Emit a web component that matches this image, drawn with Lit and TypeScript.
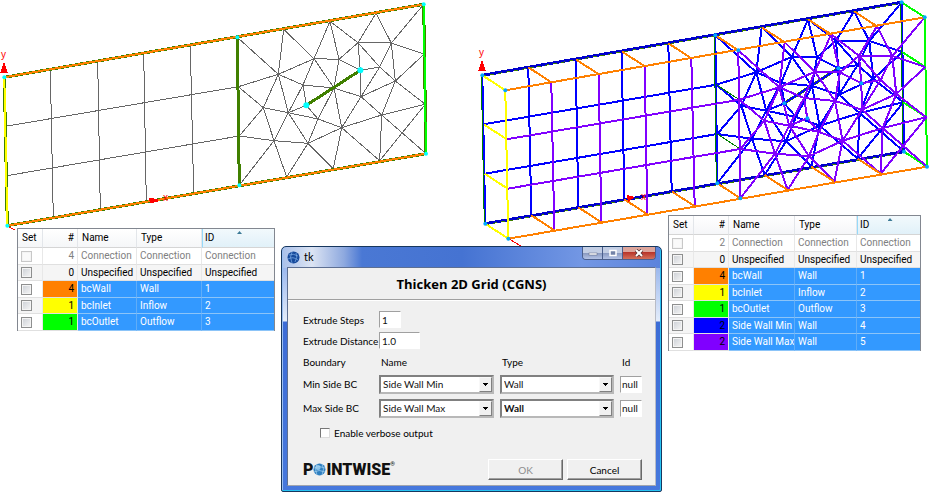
import { LitElement, html, css, svg } from "lit";
import { customElement, property } from "lit/decorators.js";
import { classMap } from "lit/directives/class-map.js";

type Point = [number, number];

/* Mesh nodes, three units to the pixel. */
const NODES: Record<string, Point> = {
  OT: [13, 232], OB: [22, 677],
  TL: [712, 112], T1: [851, 88], T2: [990, 64], T3: [1128, 40], TR: [1271, 13],
  BL: [718, 556], B1: [860, 531], B2: [1000, 506], B3: [1139, 482], BR: [1278, 461],
  L1: [715, 260], L2: [718, 408], R1: [1273, 162], R2: [1276, 313],
  a: [835, 223], b: [942, 176], c: [1017, 178], d: [1074, 128], e: [1174, 129],
  f: [1081, 211], g: [1139, 201], h: [1186, 243], i: [909, 255], j: [1002, 264],
  k: [1083, 290], l: [919, 316], m: [790, 323], n: [865, 338], o: [954, 357],
  p: [1025, 383], q: [1145, 345], r: [822, 422], s: [924, 430],
  O1: [17, 379], O2: [20, 527],
  u1: [151, 208], u2: [293, 184], u3: [431, 160], u4: [571, 136],
  v1: [160, 652], v2: [301, 628], v3: [439, 604], v4: [581, 580],
};

const GRID_EDGES = "u1-v1 u2-v2 u3-v3 u4-v4 O1-L1 O2-L2";
const MESH_EDGES =
  "TL-a T1-a T1-b a-b b-T2 T2-c b-c T2-d c-d c-f c-j d-T3 d-e d-f d-g T3-e e-TR e-R1 e-h e-g " +
  "f-g g-h h-R1 h-R2 h-k h-q f-k g-k j-k i-j b-i b-j a-i a-m a-n a-L1 i-l i-n L1-m m-n m-L2 m-r " +
  "n-l n-r n-s n-o l-o o-s o-p o-j j-p k-p k-q p-q p-s p-B2 p-B3 s-B1 s-B2 r-s r-L2 r-BL r-B1 " +
  "q-R2 q-B3 q-BR R2-B3";

const at = (name: string, dx = 0, dy = 0): string =>
  `${(NODES[name][0] / 3 + dx).toFixed(1)} ${(NODES[name][1] / 3 + dy).toFixed(1)}`;

const path = (edges: string, dx = 0, dy = 0): string =>
  edges.split(" ").map((edge) => {
    const [from, to] = edge.split("-");
    return `M${at(from, dx, dy)}L${at(to, dx, dy)}`;
  }).join("");

/* Back plane and front plane of the thickened grid. */
const MIN: Point = [478, -2];
const MAX: Point = [501, 13];

const rungs = (names: string): string =>
  names.split(" ").map((n) => `M${at(n, ...MIN)}L${at(n, ...MAX)}`).join("");

const dot = (name: string, offset: Point = [0, 0], r = 2) => svg`
  <circle r=${r} cx=${NODES[name][0] / 3 + offset[0]} cy=${NODES[name][1] / 3 + offset[1]}></circle>`;

@customElement("grid-view")
export class GridView extends LitElement {
  static styles = css`
    :host { display: block; }
    svg { display: block; width: 100%; height: auto; }
    path { fill: none; shape-rendering: crispEdges; }
    .cell { stroke: #666; stroke-width: 1; }
    .edge { stroke: #408000; stroke-width: 3; }
    .wall { stroke: #ff8000; stroke-width: 2; }
    .under { stroke: #408000; stroke-width: 3; }
    .inlet { stroke: #ff0; stroke-width: 2; }
    .outlet { stroke: #0f0; stroke-width: 2; }
    .min { stroke: #00f; stroke-width: 2; }
    .rim { stroke: #00c; stroke-width: 3; }
    .dashes { stroke: #408000; stroke-width: 1; stroke-dasharray: 4 4; }
    .max { stroke: #8000ff; stroke-width: 2; }
    .thin { stroke: #008000; stroke-width: 1; }
    .axis { stroke: #f00; stroke-width: 1; }
    path.arrow { fill: #f00; }
    .nodes { fill: #0ff; }
    .nodes-3d { fill: #00a8ff; }
    text { fill: #f00; font: 10px "Liberation Sans", sans-serif; }
  `;

  render() {
    return html`
      <svg viewBox="0 0 930 246" role="img" aria-label="2D grid and thickened 3D grid">
        <path class="cell" d=${path(GRID_EDGES + " " + MESH_EDGES)}></path>
        <path class="edge" d=${path("TL-BL l-f")}></path>
        <path class="under" d=${path("OT-TR OB-BR OT-OB TR-BR")}></path>
        <path class="wall" d=${path("OT-TR OB-BR")}></path>
        <path class="inlet" d=${path("OT-OB")}></path>
        <path class="outlet" d=${path("TR-BR")}></path>
        <path class="arrow" d="M4 62L8 73H0Z M149 198L158 199V202L150 203Z"></path>
        <path class="axis" d="M9 227L15 230"></path>
        <text x="1" y="58">y</text>
        <text x="163" y="201">x</text>
        <g class="nodes">
          ${["OT", "OB", "TL", "BL", "TR", "BR"].map((n) => dot(n))}
          ${["l", "f"].map((n) => dot(n, [0, 0], 3))}
        </g>

        <path class="edge" d=${path("l-f", ...MIN)}></path>
        <path class="min" d=${path(GRID_EDGES + " " + MESH_EDGES + " l-f TL-BL TR-BR OT-OB", ...MIN)}></path>
        <path class="thin" d=${path("TL-BL TR-BR OT-OB", MIN[0] - 1, MIN[1])}></path>
        <path class="rim" d=${path("OT-TR OB-BR", ...MIN)}></path>
        <path class="dashes" d=${path("OT-TR OB-BR", MIN[0], MIN[1] + 1)}></path>
        <path class="thin" d=${rungs("L1 L2")}></path>
        <path class="outlet" d=${rungs("TR R1 R2 BR") + path("TR-BR", ...MAX)}></path>
        <path class="inlet" d=${rungs("OT O1 O2 OB") + path("OT-OB", ...MAX)}></path>
        <path class="max" d=${path(GRID_EDGES + " " + MESH_EDGES + " TL-BL", ...MAX)}></path>
        <path class="wall" d=${rungs("u1 u2 u3 u4 v1 v2 v3 v4 TL T1 T2 T3 BL B1 B2 B3") + path("OT-TR OB-BR", ...MAX)}></path>
        <path class="arrow" d="M482 60L486 71H478Z M627 195L635 197L628 202Z"></path>
        <path class="axis" d="M509 239L521 246"></path>
        <text x="479" y="56">y</text>
        <text x="641" y="200">x</text>
        <g class="nodes-3d">
          ${["OT", "OB", "TL", "BL", "TR", "BR", "l", "f"].map((n) => [dot(n, MIN), dot(n, MAX)])}
        </g>
      </svg>
    `;
  }
}

interface Condition {
  count: number;
  name: string;
  type: string;
  id: string;
  look: string;
}

const plain = (count: number): Condition[] => [
  { count, name: "Connection", type: "Connection", id: "Connection", look: "muted" },
  { count: 0, name: "Unspecified", type: "Unspecified", id: "Unspecified", look: "plain" },
  { count: 4, name: "bcWall", type: "Wall", id: "1", look: "orange" },
  { count: 1, name: "bcInlet", type: "Inflow", id: "2", look: "yellow" },
  { count: 1, name: "bcOutlet", type: "Outflow", id: "3", look: "green" },
];

const BEFORE = plain(4);
const AFTER: Condition[] = [
  ...plain(2),
  { count: 2, name: "Side Wall Min", type: "Wall", id: "4", look: "blue" },
  { count: 2, name: "Side Wall Max", type: "Wall", id: "5", look: "violet" },
];

@customElement("condition-table")
export class ConditionTable extends LitElement {
  static styles = css`
    :host { display: block; font: 10px/14px Roboto, "Noto Sans", sans-serif; color: #000; }
    table {
      width: 100%; border-collapse: separate; border-spacing: 0; table-layout: fixed;
      background: #fff; box-sizing: border-box;
      border: solid #828790; border-width: 1px 1px 0 1px;
    }
    th, td { box-sizing: border-box; padding: 0 0 0 3px; text-align: left; white-space: nowrap; overflow: hidden; font-weight: 400; }
    th { height: 19px; padding-left: 4px; border-right: 1px solid #e3e6ea; border-bottom: 1px solid #d5d5d5; background: linear-gradient(#fff, #f5f6f8); }
    td { height: 17px; border-right: 1px solid #e8e8e8; border-bottom: 1px solid #e0e0e0; }
    tr:nth-child(even) td { height: 16px; background: #f5f5f5; }
    th.count, td.count { text-align: right; padding: 0 3px 0 0; }
    th.sorted {
      border-left: 1px solid #96d9f9; border-right: 0; padding-left: 2px;
      background: linear-gradient(#f2f9fc, #e1f1f9);
    }
    .heading { display: grid; }
    .heading > * { grid-area: 1 / 1; }
    .marker { width: 5px; height: 3px; justify-self: center; background: #3c7a96; clip-path: polygon(50% 0, 100% 100%, 0 100%); }
    td:last-child { border-right: 0; }
    .set { width: 25px; }
    .num { width: 35px; }
    .name { width: 59px; }
    .compact .name { width: 66px; }
    .type { width: 65px; }
    .compact .type { width: 62px; }
    .muted { color: #808080; }
    .picked .text, tr.picked:nth-child(even) .text { background: #39f; color: #fff; border-right-color: #60adf8; border-bottom-color: #8cc4f8; }
    tr.orange td.count { background: #ff8000; }
    tr.yellow td.count { background: #ff0; }
    tr.green td.count { background: #0f0; }
    tr.blue td.count { background: #00f; }
    tr.violet td.count { background: #8000ff; }
    input {
      appearance: none; display: block; box-sizing: border-box; width: 11px; height: 11px; margin: 0;
      border: 1px solid #8e8f8f; outline: 1px solid #f4f4f4; outline-offset: -2px;
      background: linear-gradient(135deg, #cbcfd5, #f6f6f6);
    }
    .muted input { border-color: #c8c8c8; background: #fafafa; }
  `;

  @property({ attribute: false }) rows: Condition[] = [];
  @property({ type: Boolean }) compact = false;

  render() {
    return html`
      <table class=${classMap({ compact: this.compact })}>
        <thead>
          <tr>
            <th class="set">Set</th>
            <th class="num count">#</th>
            <th class="name">Name</th>
            <th class="type">Type</th>
            <th class="sorted"><div class="heading"><span>ID</span><span class="marker"></span></div></th>
          </tr>
        </thead>
        <tbody>
          ${this.rows.map((row) => html`
            <tr class=${classMap({ [row.look]: true, picked: row.look !== "muted" && row.look !== "plain" })}>
              <td><input type="checkbox" aria-label="Set ${row.name}" ?disabled=${row.look === "muted"}></td>
              <td class="count">${row.count}</td>
              <td class="text">${row.name}</td>
              <td class="text">${row.type}</td>
              <td class="text">${row.id}</td>
            </tr>`)}
        </tbody>
      </table>
    `;
  }
}

@customElement("thicken-dialog")
export class ThickenDialog extends LitElement {
  static styles = css`
    :host { display: block; font: 10px/14px Lato, "Noto Sans", sans-serif; color: #000; }
    .window {
      box-sizing: border-box; padding: 0 5px 5px; border: 1px solid #17375e; border-radius: 5px 5px 2px 2px;
      box-shadow: inset -1px -1px #27c3f3, inset 1px 0 #9cc0f2;
      background:
        linear-gradient(90deg, #a9c0ea 0, #dce4f3 30px, #8ea9df 62px, #4a78d4 80px, #4573d2 180px, #7397e4 300px, #5b83dc 100%) 0 0 / 100% 21px no-repeat,
        linear-gradient(#7fa3e8, #e4edfb 74px, #3c6cd6 75px, #4678dd 100%);
    }
    .titlebar { display: flex; align-items: center; height: 20px; }
    .titlebar svg { width: 13px; height: 13px; }
    .caption { flex: 1; padding-left: 4px; font-size: 11px; }
    .controls { display: flex; align-self: flex-start; border: 1px solid #4b5f8c; border-top: 0; border-radius: 0 0 4px 4px; overflow: hidden; }
    .controls button {
      display: grid; place-items: center; width: 20px; height: 12px; padding: 0; border: 0; border-right: 1px solid #4b5f8c;
      background: linear-gradient(#c3cee4 50%, #8898bf 50%, #b4c3e6);
    }
    .controls button.close { width: 32px; border-right: 0; background: linear-gradient(#dda59b 45%, #b8352a 45%, #d4705a); }
    .controls svg { width: 10px; height: 8px; }
    .body { background: #f0f0f0; border: 1px solid #5d6f92; border-right-color: #b8bcc6; border-bottom-color: #a0a4ae; }
    h1 { margin: 0; padding: 6px 0 5px; text-align: center; font: 700 13px/20px "Open Sans", "Noto Sans", sans-serif; color: #000; border-bottom: 1px solid #a0a0a0; box-shadow: 0 1px #fff; }
    form { display: block; padding: 9px 13px 5px 15px; }
    .fields {
      display: grid; grid-template-columns: 70px 115fr 114fr 22px; column-gap: 6px;
      grid-template-rows: repeat(3, 21px) 24px 24px 25px; align-items: center;
    }
    .fields label { white-space: nowrap; }
    .wide { grid-column: 2 / -1; }
    .head { padding-left: 2px; }
    input, select { box-sizing: border-box; font: inherit; color: #111; margin: 0; }
    input.box { height: 17px; padding: 0 2px; border: 1px solid; border-color: #a0a0a0 #fff #fff #a0a0a0; background: #fff; width: 22px; }
    input.box.long { width: 41px; }
    input.box.id { padding: 0 0 0 1px; }
    .combo { display: grid; }
    .combo::after {
      content: ""; grid-area: 1 / 1; justify-self: end; align-self: center; pointer-events: none;
      width: 13px; height: 15px; margin-right: 2px; box-sizing: border-box;
      border: 1px solid; border-color: #f8f8f8 #808080 #808080 #f8f8f8;
      background: linear-gradient(#000, #000) 3px 5px / 5px 1px no-repeat, linear-gradient(#000, #000) 4px 6px / 3px 1px no-repeat,
        linear-gradient(#000, #000) 5px 7px / 1px 1px no-repeat, #f0f0f0;
    }
    select {
      appearance: none; grid-area: 1 / 1; width: 100%; height: 19px; padding: 0 14px 0 2px; border-radius: 0;
      border: 2px solid; border-color: #808080 #b8b8b8 #b8b8b8 #808080; background: #fff;
    }
    select.strong { font-weight: 700; }
    .check { grid-column: 1 / -1; display: flex; align-items: center; gap: 4px; padding-left: 17px; }
    .check input { appearance: none; width: 10px; height: 10px; border: 1px solid; border-color: #777 #ddd #ddd #777; background: #fff; }
    .footer { display: flex; align-items: center; gap: 4px; padding-top: 14px; }
    .logo { display: flex; align-items: center; flex: 1; font: 900 16px/20px Roboto, "Liberation Sans", sans-serif; color: #111; }
    .logo svg { width: 13px; height: 13px; }
    .logo sup { align-self: flex-start; font-size: 6px; line-height: 8px; }
    .action {
      width: 75px; height: 21px; padding: 0; font: inherit; color: #000; background: #f0f0f0;
      border: 1px solid; border-color: #fff #696969 #696969 #fff; box-shadow: inset -1px -1px #a0a0a0;
    }
    .action:disabled { color: #8d8d8d; }
  `;

  private side(label: string, name: string, type: string, strong: boolean) {
    const key = label.slice(0, 3).toLowerCase();
    return html`
      <label for="${key}-name">${label}</label>
      <span class="combo"><select id="${key}-name"><option>${name}</option></select></span>
      <span class="combo"><select class=${classMap({ strong })} aria-label="${label} type"><option>${type}</option></select></span>
      <input class="box id" aria-label="${label} id" value="null">
    `;
  }

  render() {
    return html`
      <section class="window" role="dialog" aria-labelledby="title">
        <header class="titlebar">
          <svg viewBox="0 0 13 13" aria-hidden="true">
            <circle cx="6.5" cy="6.5" r="6" fill="#174a9c"></circle>
            <path d="M2 4q4 -2 9 1M1 8q5 -3 10 1M5 1q-3 5 0 11M9 2q2 4 -1 9" fill="none" stroke="#7fb0ea" stroke-width=".7"></path>
          </svg>
          <span class="caption">tk</span>
          <div class="controls">
            <button aria-label="Minimize"><svg viewBox="0 0 10 8"><rect x="1" y="4" width="8" height="2" fill="#fff" stroke="#57627e" stroke-width=".5"></rect></svg></button>
            <button aria-label="Maximize"><svg viewBox="0 0 10 8"><rect x="2" y="1.500" width="6" height="5" fill="#7383a8" stroke="#fff" stroke-width="1.500"></rect></svg></button>
            <button class="close" aria-label="Close"><svg viewBox="0 0 10 8"><path d="M2 1L8 7M8 1L2 7" stroke="#5c3436" stroke-width="3.500"></path><path d="M2 1L8 7M8 1L2 7" stroke="#fff" stroke-width="2"></path></svg></button>
          </div>
        </header>
        <div class="body">
          <h1 id="title">Thicken 2D Grid (CGNS)</h1>
          <form @submit=${(e: Event) => e.preventDefault()}>
            <div class="fields">
              <label for="steps">Extrude Steps</label>
              <span class="wide"><input class="box" id="steps" value="1"></span>
              <label for="distance">Extrude Distance</label>
              <span class="wide"><input class="box long" id="distance" value="1.0"></span>
              <span>Boundary</span><span class="head">Name</span><span class="head">Type</span><span class="head">Id</span>
              ${this.side("Min Side BC", "Side Wall Min", "Wall", false)}
              ${this.side("Max Side BC", "Side Wall Max", "Wall", true)}
              <label class="check"><input type="checkbox">Enable verbose output</label>
            </div>
            <div class="footer">
              <span class="logo">P<svg viewBox="0 0 13 13" aria-label="O">
                  <circle cx="6.500" cy="6.500" r="6" fill="#2f7fc0"></circle>
                  <circle cx="5" cy="4.500" r="2.500" fill="#8cc4ea"></circle>
                  <path d="M1 5q5 -3 11 0M1 9q5 -3 11 0M4 1q-3 5 0 11M9 1q3 5 0 11" fill="none" stroke="#a8d4f2" stroke-width=".7"></path>
                </svg>INTWISE<sup>®</sup></span>
              <button class="action" disabled>OK</button>
              <button class="action">Cancel</button>
            </div>
          </form>
        </div>
      </section>
    `;
  }
}

@customElement("app-root")
export class AppRoot extends LitElement {
  static styles = css`
    :host { display: block; background: #fff; }
    .desktop { display: grid; }
    .desktop > * { grid-area: 1 / 1; }
    .windows {
      display: grid; grid-template-columns: 258px 1fr 253px; column-gap: 6px; align-items: start;
      padding: 215px 9px 0 17px;
    }
    .before { margin-top: 13px; }
    .dialog { margin-top: 31px; }
  `;

  render() {
    return html`
      <main class="desktop">
        <grid-view></grid-view>
        <div class="windows">
          <condition-table class="before" .rows=${BEFORE}></condition-table>
          <thicken-dialog class="dialog"></thicken-dialog>
          <condition-table .rows=${AFTER} compact></condition-table>
        </div>
      </main>
    `;
  }
}
